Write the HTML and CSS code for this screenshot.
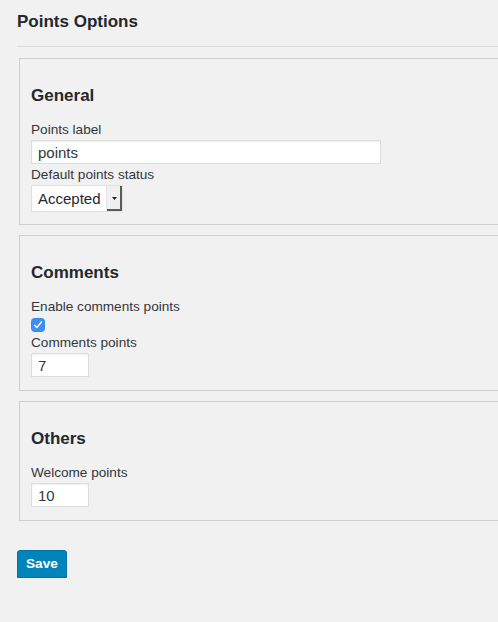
FILE: index.html
```html
<!DOCTYPE html>
<html>
<head>
<meta charset="utf-8">
<link rel="stylesheet" href="styles.css">
</head>
<body>
<div class="wrap">
  <h1 class="title">Points Options</h1>
  <hr class="sep">
  <form class="form">
    <fieldset class="box">
      <h2 class="box-title">General</h2>
      <label class="lbl">Points label</label>
      <input class="text wide" type="text" value="points">
      <label class="lbl">Default points status</label>
      <div class="select"><span class="select-val">Accepted</span><span class="select-btn"><svg width="5" height="3" viewBox="0 0 5 3"><path d="M0 0h5L2.5 3z" fill="#222"/></svg></span></div>
    </fieldset>
    <fieldset class="box">
      <h2 class="box-title">Comments</h2>
      <label class="lbl">Enable comments points</label>
      <span class="check"><svg width="14" height="14" viewBox="0 0 14 14"><rect x="0.5" y="0.5" width="13" height="13" rx="3" fill="#3d8ef7" stroke="#3a86ea"/><path d="M3.6 7.2l2.3 2.4 4.5-5.6" fill="none" stroke="#fff" stroke-width="1.4" stroke-linecap="round" stroke-linejoin="round"/></svg></span>
      <label class="lbl">Comments points</label>
      <input class="text small" type="text" value="7">
    </fieldset>
    <fieldset class="box">
      <h2 class="box-title">Others</h2>
      <label class="lbl">Welcome points</label>
      <input class="text small" type="text" value="10">
    </fieldset>
    <button class="save" type="button">Save</button>
  </form>
</div>
</body>
</html>
```
FILE: styles.css
```css
html, body {
  margin: 0;
  padding: 0;
  background: #f1f1f1;
}
body {
  font-family: "Liberation Sans", Arial, sans-serif;
  color: #23282d;
  font-size: 13.6px;
}
.wrap {
  padding: 0 0 0 17px;
}
.title {
  margin: 0;
  padding-top: 12px;
  font-size: 17px;
  font-weight: bold;
  line-height: 20px;
  color: #23282d;
}
.sep {
  margin: 14px 0 0 0;
  border: 0;
  border-top: 1px solid #dcdcdc;
  height: 0;
}
.form {
  margin-top: 11px;
  margin-left: 2px;
}
.box {
  margin: 0 0 10px 0;
  padding: 0 0 12px 11px;
  border: 1px solid #cfcfcf;
  border-right: 0;
  display: flex;
  flex-direction: column;
  align-items: flex-start;
  min-width: 0;
}
.box-title {
  margin: 27px 0 16px 0;
  font-size: 17px;
  line-height: 20px;
  font-weight: bold;
  color: #23282d;
}
.lbl {
  display: block;
  line-height: 16px;
  color: #32373c;
}
.text {
  box-sizing: border-box;
  height: 24px;
  margin: 2px 0 3px 0;
  padding: 0 6px;
  border: 1px solid #ddd;
  background: #fff;
  box-shadow: inset 0 1px 2px rgba(0,0,0,0.07);
  font-family: inherit;
  font-size: 15px;
  color: #32373c;
  outline: none;
}
.box .text:last-child { margin-bottom: 1px; }
.wide { width: 350px; }
.small { width: 58px; }
.select {
  display: flex;
  margin-top: 2px;
  height: 27px;
  box-sizing: border-box;
  border: 1px solid #e0e0e0;
  background: #fff;
}
.select-val {
  padding: 0 5px 0 6px;
  line-height: 25px;
  font-size: 15px;
  color: #23282d;
}
.select-btn {
  width: 15px;
  display: flex;
  align-items: center;
  justify-content: center;
  background: #f0f0f0;
  border-left: 1px solid #e5e5e5;
  box-shadow: inset -2px -2px 0 #5a5a5a;
}
.check {
  display: block;
  height: 14px;
  margin: 3px 0 3px 0;
}
.check svg { display: block; }
.save {
  margin-top: 19px;
  margin-left: -2px;
  height: 28px;
  padding: 0 8px 1px;
  background: #0085ba;
  border: 1px solid #0073aa;
  border-radius: 3px;
  box-shadow: 0 1px 0 #006799;
  color: #fff;
  font-family: inherit;
  font-size: 13.6px;
  font-weight: bold;
}
```
